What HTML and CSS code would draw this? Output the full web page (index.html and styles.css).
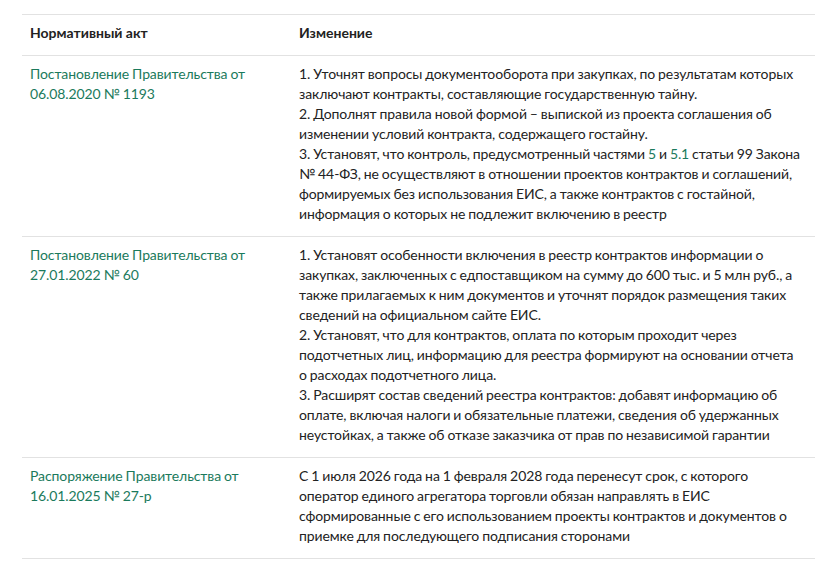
FILE: index.html
```html
<!DOCTYPE html>
<html lang="ru">
<head>
<meta charset="utf-8">
<title>Изменения</title>
<link rel="stylesheet" href="styles.css">
</head>
<body>
<table class="acts">
  <thead>
    <tr><th class="col-act">Нормативный акт</th><th>Изменение</th></tr>
  </thead>
  <tbody>
    <tr>
      <td class="col-act"><a href="#">Постановление Правительства от 06.08.2020 № 1193</a></td>
      <td>1. Уточнят вопросы документооборота при закупках, по результатам которых заключают контракты, составляющие государственную тайну.<br>2. Дополнят правила новой формой – выпиской из проекта соглашения об изменении условий контракта, содержащего гостайну.<br>3. Установят, что контроль, предусмотренный частями <a href="#">5</a> и <a href="#">5.1</a> статьи 99 Закона № 44-ФЗ, не осуществляют в отношении проектов контрактов и соглашений, формируемых без использования ЕИС, а также контрактов с гостайной, информация о которых не подлежит включению в реестр</td>
    </tr>
    <tr>
      <td class="col-act"><a href="#">Постановление Правительства от 27.01.2022 № 60</a></td>
      <td>1. Установят особенности включения в реестр контрактов информации о закупках, заключенных с едпоставщиком на сумму до 600 тыс. и 5 млн руб., а также прилагаемых к ним документов и уточнят порядок размещения таких сведений на официальном сайте ЕИС.<br>2. Установят, что для контрактов, оплата по которым проходит через подотчетных лиц, информацию для реестра формируют на основании отчета о расходах подотчетного лица.<br>3. Расширят состав сведений реестра контрактов: добавят информацию об оплате, включая налоги и обязательные платежи, сведения об удержанных неустойках, а также об отказе заказчика от прав по независимой гарантии</td>
    </tr>
    <tr>
      <td class="col-act"><a href="#">Распоряжение Правительства от 16.01.2025 № 27-р</a></td>
      <td>С 1 июля 2026 года на 1 февраля 2028 года перенесут срок, с которого оператор единого агрегатора торговли обязан направлять в ЕИС сформированные с его использованием проекты контрактов и документов о приемке для последующего подписания сторонами</td>
    </tr>
  </tbody>
</table>
</body>
</html>
```
FILE: styles.css
```css
html, body {
  margin: 0;
  padding: 0;
  background: #ffffff;
}
body {
  padding: 14px 15px 0 22px;
  font-family: Lato, "Open Sans", sans-serif;
  font-size: 14px;
  line-height: 20px;
  color: #222222;
}
.acts {
  width: 793px;
  border-collapse: collapse;
  border-top: 1px solid #e2e2e2;
}
.acts th,
.acts td {
  text-align: left;
  vertical-align: top;
  padding: 8px 12px 12px 8px;
  border-bottom: 1px solid #e2e2e2;
}
.acts td {
  letter-spacing: -0.1px;
  word-spacing: -0.5px;
}
.acts th {
  font-weight: 700;
}
.col-act {
  width: 249px;
}
.acts a {
  color: #1b7a5c;
  text-decoration: none;
}
```
